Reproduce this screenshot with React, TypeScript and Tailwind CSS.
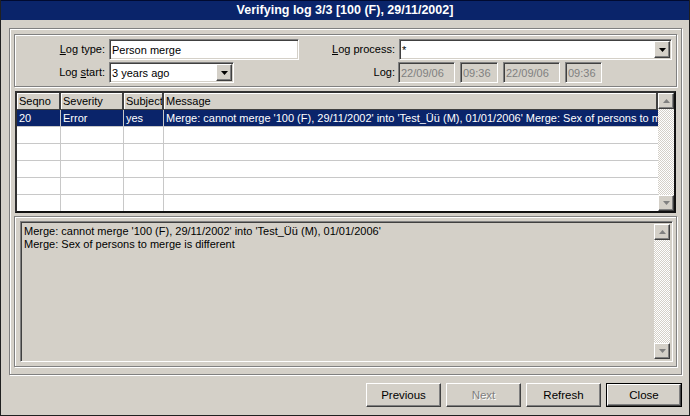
import React from "react";

const raised =
  "border border-t-white border-l-white border-r-[#404040] border-b-[#404040] shadow-[inset_-1px_-1px_0_#808080]";
const sunken =
  "border border-t-[#808080] border-l-[#808080] border-r-white border-b-white shadow-[inset_1px_1px_0_#404040,inset_-1px_-1px_0_#d4d0c8]";
const etched = "border border-[#808080] shadow-[inset_1px_1px_0_#ffffff,1px_1px_0_#ffffff]";
const checker =
  "bg-[repeating-conic-gradient(#d4d0c8_0%_25%,#ffffff_0%_50%)] bg-[length:2px_2px]";

function Tri({ up, color }: { up?: boolean; color: string }) {
  return (
    <svg width="7" height="4" viewBox="0 0 7 4" className="block">
      {up ? <path d="M3.5 0 L7 4 L0 4 Z" fill={color} /> : <path d="M0 0 L7 0 L3.5 4 Z" fill={color} />}
    </svg>
  );
}

function ScrollBtn({ up }: { up?: boolean }) {
  return (
    <div className={`w-[16px] h-[16px] shrink-0 bg-[#d4d0c8] flex items-center justify-center ${raised}`}>
      <Tri up={up} color="#808080" />
    </div>
  );
}

function VScroll() {
  return (
    <div className={`w-[16px] shrink-0 flex flex-col justify-between ${checker}`}>
      <ScrollBtn up />
      <ScrollBtn />
    </div>
  );
}

function Field({ w, value, disabled, combo, className = "" }: { w: string; value: string; disabled?: boolean; combo?: boolean; className?: string }) {
  return (
    <div
      className={`${w} h-[21px] shrink-0 flex items-center ${sunken} ${disabled ? "bg-[#d4d0c8] text-[#808080]" : "bg-white text-black"} ${className}`}
    >
      <span className="flex-1 pl-[2px] pt-[1px] whitespace-nowrap overflow-hidden">{value}</span>
      {combo && (
        <div className={`w-[16px] h-[17px] mr-[1px] bg-[#d4d0c8] flex items-center justify-center ${raised}`}>
          <Tri color="#000000" />
        </div>
      )}
    </div>
  );
}

const cols = ["w-[44px]", "w-[63px]", "w-[40px]", "flex-1"];
const headers = ["Seqno", "Severity", "Subject", "Message"];
const firstRow = [
  "20",
  "Error",
  "yes",
  "Merge: cannot merge '100 (F), 29/11/2002' into 'Test_Üü (M), 01/01/2006' Merge: Sex of persons to merge is different",
];

export default function App() {
  return (
    <div
      className="w-[690px] h-[416px] bg-[#d4d0c8] border-l border-r border-b border-[#202020] flex flex-col text-[11px] leading-[13px] text-black overflow-hidden"
      style={{ fontFamily: '"Liberation Sans", Arial, sans-serif' }}
    >
      <div className="h-[20px] shrink-0 bg-[#0a246a] border-t border-[#000a30] flex items-center justify-center text-white font-bold text-[12.5px]">
        Verifying log 3/3 [100 (F), 29/11/2002]
      </div>

      <div className={`mt-[8px] ml-[8px] mr-[7px] h-[347px] shrink-0 px-[4px] pt-[5px] pb-[7px] flex flex-col ${etched}`}>
        {/* filter panel */}
        <div className={`h-[53px] shrink-0 pt-[4px] flex flex-col gap-[2px] ${etched}`}>
          <div className="flex items-center">
            <span className="w-[90px] text-right">
              <span className="underline">L</span>og type:
            </span>
            <Field w="w-[190px]" value="Person merge" className="ml-[4px]" />
            <span className="w-[96px] text-right">
              <span className="underline">L</span>og process:
            </span>
            <Field w="w-[273px]" value="*" combo className="ml-[4px]" />
          </div>
          <div className="flex items-center">
            <span className="w-[90px] text-right">
              Log <span className="underline">s</span>tart:
            </span>
            <Field w="w-[125px]" value="3 years ago" combo className="ml-[4px]" />
            <span className="w-[161px] text-right">Log:</span>
            <Field w="w-[57px]" value="22/09/06" disabled className="ml-[3px]" />
            <Field w="w-[38px]" value="09:36" disabled className="ml-[5px]" />
            <Field w="w-[57px]" value="22/09/06" disabled className="ml-[5px]" />
            <Field w="w-[37px]" value="09:36" disabled className="ml-[5px]" />
          </div>
        </div>

        {/* grid */}
        <div className="mt-[4px] mx-[1px] h-[122px] shrink-0 border-2 border-t-[#303030] border-l-[#303030] border-r-[#101010] border-b-[#101010] bg-white flex overflow-hidden">
          <div className="flex-1 flex flex-col overflow-hidden">
            <div className="h-[17px] shrink-0 flex bg-[#d4d0c8] border-b border-[#404040]">
              {headers.map((h, i) => (
                <div
                  key={h}
                  className={`${cols[i]} shrink-0 pl-[2px] flex items-center border-r-2 border-[#404040] shadow-[inset_1px_1px_0_#ffffff] overflow-hidden whitespace-nowrap ${i === 3 ? "border-r-0" : ""}`}
                >
                  {h}
                </div>
              ))}
            </div>
            {Array.from({ length: 6 }).map((_, r) => (
              <div key={r} className={`h-[17px] shrink-0 flex ${r === 0 ? "bg-[#0a246a] text-white" : ""}`}>
                {cols.map((c, i) => (
                  <div
                    key={i}
                    className={`${c} shrink-0 pl-[2px] flex items-center border-b border-[#c8c8c8] overflow-hidden whitespace-nowrap ${i < 3 ? "border-r border-r-[#c8c8c8]" : ""}`}
                  >
                    {r === 0 ? firstRow[i] : ""}
                  </div>
                ))}
              </div>
            ))}
          </div>
          <VScroll />
        </div>

        {/* detail panel */}
        <div className={`mt-[3px] h-[151px] shrink-0 pt-[4px] pl-[5px] pr-[3px] pb-[4px] flex ${etched}`}>
          <div className={`flex-1 bg-[#d4d0c8] flex p-[2px] ${sunken}`}>
            <div className="flex-1 pl-[1px] pt-[1px] leading-[13px]">
              <div>Merge: cannot merge '100 (F), 29/11/2002' into 'Test_Üü (M), 01/01/2006'</div>
              <div>Merge: Sex of persons to merge is different</div>
            </div>
            <VScroll />
          </div>
        </div>
      </div>

      {/* buttons */}
      <div className="mt-[8px] pr-[7px] flex justify-end gap-[5px] text-[11.5px]">
        <button className={`w-[75px] h-[24px] bg-[#d4d0c8] ${raised}`}>Previous</button>
        <button className={`w-[75px] h-[24px] bg-[#d4d0c8] text-[#808080] [text-shadow:1px_1px_0_#ffffff] ${raised}`}>Next</button>
        <button className={`w-[75px] h-[24px] bg-[#d4d0c8] ${raised}`}>Refresh</button>
        <div className="w-[76px] h-[24px] border border-black flex">
          <button className={`flex-1 bg-[#d4d0c8] ${raised}`}>Close</button>
        </div>
      </div>
    </div>
  );
}
